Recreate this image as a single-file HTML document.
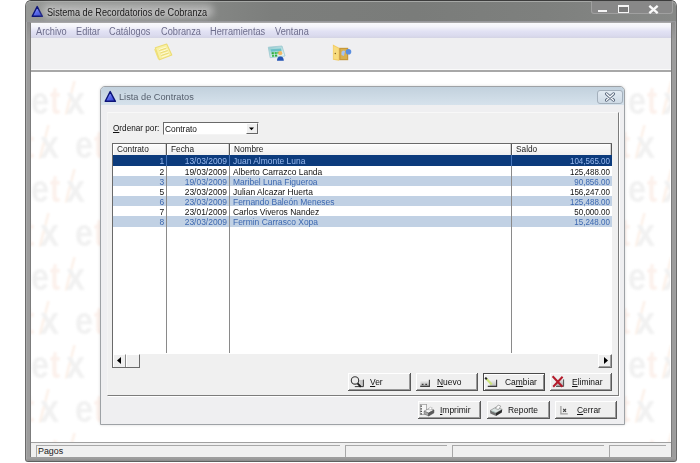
<!DOCTYPE html>
<html><head><meta charset="utf-8">
<style>
*{box-sizing:border-box;margin:0;padding:0}
html,body{width:700px;height:463px;overflow:hidden;background:#fff;font-family:"Liberation Sans",sans-serif;}
.a{position:absolute}
.t{position:absolute;white-space:pre;line-height:1}
/* main window */
#frame{left:25px;top:0;width:652px;height:462px;background:linear-gradient(#8e8e8e 0,#8e8e8e 22px,#9c9c9c 40px,#9c9c9c 456px,#a0a0a0 457px,#8c8c8c 460px,#747474 462px);border:1px solid #6a6a6a;border-top-color:#3c3c3c;border-bottom-color:#606060;border-radius:6px 6px 3px 3px;box-shadow:inset 1px 0 #a8a8a8,inset -1px 0 #a0a0a0}
#titlebar{left:26px;top:1px;width:650px;height:21px;background:linear-gradient(90deg,#979997 0%,#8c8e8c 20%,#7c7e7c 38%,#7a7c7a 60%,#7e807e 80%,#868886 100%);box-shadow:inset 0 1px #a6a8a6,inset 0 -1px #98989c;border-radius:5px 5px 0 0}
#client{left:30px;top:22px;width:642px;height:435px;background:#fff;border:1px solid #7c7c7c;border-top-color:#a8a8a8}
#menubar{left:31px;top:23px;width:640px;height:15px;background:linear-gradient(#fafafd 0%,#f4f4fa 25%,#e2e2f4 55%,#dadaee 85%,#d4d4e4 100%)}
#toolbar{left:31px;top:38px;width:640px;height:34px;background:#efeff1;border-bottom:2px solid #a8a8a8;box-shadow:inset 0 -1px #fafafa}
#status{left:31px;top:442px;width:640px;height:15px;background:#f0f0f0;border-top:1px solid #a0a0a0}
.sp{position:absolute;top:445px;height:12px;border-top:1px solid #a8a8a8;border-left:1px solid #a8a8a8}
.wm{position:absolute;width:80px;height:44px;font-size:38px;line-height:1;white-space:pre;filter:blur(1px);font-weight:bold}
.wm span{position:absolute;top:0;display:block;transform:scaleX(0.8);transform-origin:0 0}
.wm .g{color:#f1f1f1}
.wm .o{color:#fcf1ec}
.wm .sl{font-weight:normal;color:#fcefe6;transform:scaleX(0.75) scaleY(1.2) skewX(-8deg);transform-origin:0 80%}
.wm .xx{transform:scaleX(0.9)}
.wm .ee{transform:scaleX(0.85)}
/* dialog */
#dlg{left:100px;top:86px;width:525px;height:339px;background:#efeff1;border:1px solid #9ea2a6;border-radius:5px 5px 0 0;box-shadow:0 0 3px rgba(0,0,0,0.15)}
#dlgtitle{left:101px;top:87px;width:523px;height:18px;background:linear-gradient(#c2d1dd,#d6e2ec);border-radius:4px 4px 0 0}
#dlgbody{left:107px;top:112px;width:512px;height:284px;background:#f0f0f0;border-right:1px solid #7c7c7c;border-bottom:1px solid #7c7c7c;border-top:1px solid #f8f8f8;border-left:1px solid #f4f4f4;box-shadow:1px 1px #fff}
#grid{left:112px;top:143px;width:500px;height:225px;background:#fff;border-left:1px solid #6a6a6a;border-top:1px solid #6a6a6a}
.hdr{position:absolute;top:144px;height:11px;background:linear-gradient(#fdfdfd,#efefef);border-right:1px solid #555;box-shadow:inset -1px 0 #d4d4d4,inset 1px 1px #fff}
.row{position:absolute;left:113px;width:499px;height:10px}
.cell{position:absolute;font-size:9.2px;line-height:10px;white-space:pre;margin-top:1px;transform:scaleX(0.92);transform-origin:100% 0}
.cell.n{transform:scaleX(0.87)}
.cell.l{transform-origin:0 0}
.vl{position:absolute;top:155px;height:198px;width:1px;background:#8a8a8a}
.btn{position:absolute;height:18px;width:63px;background:#efefef;border-right:1px solid #5a5a5a;border-bottom:1px solid #5a5a5a;box-shadow:inset 1px 1px #fff,inset -1px -1px #9a9a9a}
.btn .l{position:absolute;top:4px;white-space:pre;color:#111;line-height:1}
u{text-decoration:underline;text-underline-offset:1px}
</style></head><body>
<div class="a" id="frame"></div>
<div class="a" id="titlebar"></div>
<!-- title icon -->
<svg class="a" style="left:31px;top:5px" width="13" height="13" viewBox="0 0 13 13">
<defs><linearGradient id="tg" x1="0.1" y1="0.2" x2="0.8" y2="1"><stop offset="0" stop-color="#b4c0ff"/><stop offset="0.45" stop-color="#6070f0"/><stop offset="1" stop-color="#3444d0"/></linearGradient></defs>
<path d="M6.2 1.6 L11.4 11.3 L1.2 11.3 Z" fill="url(#tg)" stroke="#0c1478" stroke-width="1.4" stroke-linejoin="round"/>
</svg>
<div class="a" style="left:42px;top:4px;width:172px;height:14px;border-radius:7px;background:rgba(200,200,200,0.6);filter:blur(3px)"></div>
<div class="t" style="left:46.5px;top:7.6px;font-size:10px;transform:scaleX(0.915);transform-origin:0 0;color:#1a1a1a;text-shadow:0 0 5px #c0c0c0,0 0 3px #c8c8c8">Sistema de Recordatorios de Cobranza</div>
<!-- caption buttons -->
<div class="a" style="left:591px;top:1px;width:82px;height:13px;border:1px solid #a0a0a0;border-top:none;border-radius:0 0 3px 3px;background:#888"></div>
<div class="a" style="left:598px;top:10px;width:9px;height:2px;background:#f4f4f4"></div>
<div class="a" style="left:617.5px;top:5px;width:11px;height:7.5px;border:1.6px solid #f6f6f6;border-top-width:2.6px;background:#7a7a7a"></div>
<svg class="a" style="left:648px;top:4.5px" width="11" height="9" viewBox="0 0 11 9"><path d="M1.3 0.8 L9.7 8.2 M9.7 0.8 L1.3 8.2" stroke="#f8f8f8" stroke-width="2.3"/></svg>

<div class="a" id="client"></div>
<div class="a" id="menubar"></div>
<div class="t" style="left:35.5px;top:27px;font-size:10px;transform:scaleX(0.92);transform-origin:0 0;color:#6e6e8c">Archivo</div>
<div class="t" style="left:76px;top:27px;font-size:10px;transform:scaleX(0.92);transform-origin:0 0;color:#6e6e8c">Editar</div>
<div class="t" style="left:109px;top:27px;font-size:10px;transform:scaleX(0.92);transform-origin:0 0;color:#6e6e8c">Catálogos</div>
<div class="t" style="left:160.5px;top:27px;font-size:10px;transform:scaleX(0.92);transform-origin:0 0;color:#6e6e8c">Cobranza</div>
<div class="t" style="left:210px;top:27px;font-size:10px;transform:scaleX(0.92);transform-origin:0 0;color:#6e6e8c">Herramientas</div>
<div class="t" style="left:275px;top:27px;font-size:10px;transform:scaleX(0.92);transform-origin:0 0;color:#6e6e8c">Ventana</div>
<div class="a" id="toolbar"></div>
<!-- toolbar icons -->
<svg class="a" style="left:148px;top:40px;filter:blur(0.35px)" width="28" height="24" viewBox="0 0 28 24">
<path d="M7.3 7.8 L18.7 4.1 L23.8 15 L11.4 19.7 Z" fill="#f8f0a4" stroke="#ecdc74" stroke-width="1.1" stroke-linejoin="round"/>
<path d="M6.8 9 L10.8 19.2" stroke="#f0e078" stroke-width="1.4"/>
<path d="M11 9.5 L18 7.2 M12 12 L19.5 9.5 M13 14.5 L20.5 12 M14 17 L21 14.5" stroke="#fffbd8" stroke-width="1"/>
<path d="M11.2 10.5 L18.2 8.2 M12.2 13 L19.7 10.5 M13.2 15.5 L20.7 13" stroke="#e4d060" stroke-width="0.7"/>
</svg>
<svg class="a" style="left:264px;top:42px;filter:blur(0.35px)" width="28" height="22" viewBox="0 0 28 22">
<defs><linearGradient id="cg" x1="0" y1="0" x2="0.6" y2="1"><stop offset="0" stop-color="#8cc8cc"/><stop offset="1" stop-color="#e8f6f6"/></linearGradient></defs>
<path d="M4.3 5.2 L18 4 L21 14 L6.2 15.7 Z" fill="url(#cg)" stroke="#9cc8d0" stroke-width="0.8"/>
<path d="M6.5 7.2 L17 6.4 L17.6 9 L7 9.8 Z" fill="#6cc0c8"/>
<rect x="7.6" y="10.2" width="2.2" height="2" fill="#30a840"/><rect x="10.6" y="10" width="2.2" height="2" fill="#40c050"/><rect x="13.4" y="9.8" width="2" height="2" fill="#30a840"/>
<rect x="8" y="12.8" width="2.2" height="2" fill="#40c050"/><rect x="11" y="12.6" width="2.2" height="2" fill="#30a840"/>
<circle cx="16.2" cy="11.2" r="2.1" fill="#f0b868"/>
<path d="M13 18.8 Q13 14.4 16.4 14.4 Q19.8 14.4 19.8 18.8 Z" fill="#2454b4"/>
</svg>
<svg class="a" style="left:328px;top:40px;filter:blur(0.35px)" width="28" height="24" viewBox="0 0 28 24">
<path d="M11.1 7.8 L20.2 7.8 L20.2 20.2 L11.1 20.2 Z" fill="#c89838"/>
<path d="M12.5 9 L19 9 L19 19 L12.5 19 Z" fill="#d8b050"/>
<path d="M13.5 12 Q15 9.5 17 11 L16 16 L13.5 15 Z" fill="#a8c4f4"/>
<path d="M4.9 4.4 L11.1 7.8 L11.1 20.7 L4.9 19.8 Z" fill="#f2cc66"/>
<path d="M5.5 6 L10.5 8.5 L10.5 19.5 L5.5 18.8 Z" fill="#f8dc80"/>
<circle cx="7.3" cy="13.5" r="0.7" fill="#806020"/>
<circle cx="20.5" cy="11.8" r="2.8" fill="#5a8ee0"/>
</svg>
<!-- watermark -->
<div id="wm" class="a" style="left:31px;top:72px;width:639px;height:370px;overflow:hidden"><div class="wm" style="left:1px;top:10px"><span class="g ee" style="left:-1px">e</span><span class="o" style="left:18px">t</span><span class="o sl" style="left:33px">/</span><span class="g xx" style="left:34px">x</span></div><div class="wm" style="left:597.5px;top:10px"><span class="g ee" style="left:-1px">e</span><span class="o" style="left:18px">t</span><span class="o sl" style="left:33px">/</span><span class="g xx" style="left:34px">x</span></div><div class="wm" style="left:-25.3px;top:54px"><span class="g ee" style="left:-1px">e</span><span class="o" style="left:18px">t</span><span class="o sl" style="left:33px">/</span><span class="g xx" style="left:34px">x</span></div><div class="wm" style="left:44.5px;top:54px"><span class="g ee" style="left:-1px">e</span><span class="o" style="left:18px">t</span><span class="o sl" style="left:33px">/</span><span class="g xx" style="left:34px">x</span></div><div class="wm" style="left:570.7px;top:54px"><span class="g ee" style="left:-1px">e</span><span class="o" style="left:18px">t</span><span class="o sl" style="left:33px">/</span><span class="g xx" style="left:34px">x</span></div><div class="wm" style="left:1px;top:98px"><span class="g ee" style="left:-1px">e</span><span class="o" style="left:18px">t</span><span class="o sl" style="left:33px">/</span><span class="g xx" style="left:34px">x</span></div><div class="wm" style="left:597.5px;top:98px"><span class="g ee" style="left:-1px">e</span><span class="o" style="left:18px">t</span><span class="o sl" style="left:33px">/</span><span class="g xx" style="left:34px">x</span></div><div class="wm" style="left:-25.3px;top:142px"><span class="g ee" style="left:-1px">e</span><span class="o" style="left:18px">t</span><span class="o sl" style="left:33px">/</span><span class="g xx" style="left:34px">x</span></div><div class="wm" style="left:44.5px;top:142px"><span class="g ee" style="left:-1px">e</span><span class="o" style="left:18px">t</span><span class="o sl" style="left:33px">/</span><span class="g xx" style="left:34px">x</span></div><div class="wm" style="left:570.7px;top:142px"><span class="g ee" style="left:-1px">e</span><span class="o" style="left:18px">t</span><span class="o sl" style="left:33px">/</span><span class="g xx" style="left:34px">x</span></div><div class="wm" style="left:1px;top:186px"><span class="g ee" style="left:-1px">e</span><span class="o" style="left:18px">t</span><span class="o sl" style="left:33px">/</span><span class="g xx" style="left:34px">x</span></div><div class="wm" style="left:597.5px;top:186px"><span class="g ee" style="left:-1px">e</span><span class="o" style="left:18px">t</span><span class="o sl" style="left:33px">/</span><span class="g xx" style="left:34px">x</span></div><div class="wm" style="left:-25.3px;top:230px"><span class="g ee" style="left:-1px">e</span><span class="o" style="left:18px">t</span><span class="o sl" style="left:33px">/</span><span class="g xx" style="left:34px">x</span></div><div class="wm" style="left:44.5px;top:230px"><span class="g ee" style="left:-1px">e</span><span class="o" style="left:18px">t</span><span class="o sl" style="left:33px">/</span><span class="g xx" style="left:34px">x</span></div><div class="wm" style="left:570.7px;top:230px"><span class="g ee" style="left:-1px">e</span><span class="o" style="left:18px">t</span><span class="o sl" style="left:33px">/</span><span class="g xx" style="left:34px">x</span></div><div class="wm" style="left:1px;top:274px"><span class="g ee" style="left:-1px">e</span><span class="o" style="left:18px">t</span><span class="o sl" style="left:33px">/</span><span class="g xx" style="left:34px">x</span></div><div class="wm" style="left:597.5px;top:274px"><span class="g ee" style="left:-1px">e</span><span class="o" style="left:18px">t</span><span class="o sl" style="left:33px">/</span><span class="g xx" style="left:34px">x</span></div><div class="wm" style="left:-25.3px;top:318px"><span class="g ee" style="left:-1px">e</span><span class="o" style="left:18px">t</span><span class="o sl" style="left:33px">/</span><span class="g xx" style="left:34px">x</span></div><div class="wm" style="left:44.5px;top:318px"><span class="g ee" style="left:-1px">e</span><span class="o" style="left:18px">t</span><span class="o sl" style="left:33px">/</span><span class="g xx" style="left:34px">x</span></div><div class="wm" style="left:570.7px;top:318px"><span class="g ee" style="left:-1px">e</span><span class="o" style="left:18px">t</span><span class="o sl" style="left:33px">/</span><span class="g xx" style="left:34px">x</span></div><div class="wm" style="left:1px;top:362px"><span class="g ee" style="left:-1px">e</span><span class="o" style="left:18px">t</span><span class="o sl" style="left:33px">/</span><span class="g xx" style="left:34px">x</span></div><div class="wm" style="left:597.5px;top:362px"><span class="g ee" style="left:-1px">e</span><span class="o" style="left:18px">t</span><span class="o sl" style="left:33px">/</span><span class="g xx" style="left:34px">x</span></div></div>

<div class="a" id="status"></div>
<div class="sp" style="left:36px;width:304px"></div>
<div class="sp" style="left:345px;width:102px"></div>
<div class="sp" style="left:452px;width:152px"></div>
<div class="sp" style="left:609px;width:57px"></div>
<div class="t" style="left:38px;top:447px;font-size:8.9px;color:#222">Pagos</div>

<!-- dialog -->
<div class="a" id="dlg"></div>
<div class="a" id="dlgtitle"></div>
<svg class="a" style="left:104px;top:90px" width="13" height="13" viewBox="0 0 13 13">
<path d="M6.2 1.6 L11.4 11.3 L1.2 11.3 Z" fill="url(#tg)" stroke="#0c1478" stroke-width="1.4" stroke-linejoin="round"/>
</svg>
<div class="t" style="left:119px;top:92px;font-size:9.6px;transform:scaleX(0.96);transform-origin:0 0;color:#56606e">Lista de Contratos</div>
<div class="a" style="left:597px;top:90px;width:26px;height:14px;border:1px solid #a4b0bc;border-radius:3px;background:linear-gradient(#e2eaf2,#cfdbe6)"></div>
<svg class="a" style="left:604px;top:92px" width="12" height="10" viewBox="0 0 12 10"><path d="M2.5 1.8 L9.5 8.2 M9.5 1.8 L2.5 8.2" stroke="#566478" stroke-width="3" stroke-linecap="round"/><path d="M2.5 1.8 L9.5 8.2 M9.5 1.8 L2.5 8.2" stroke="#fafcff" stroke-width="1.3" stroke-linecap="round"/></svg>
<div class="a" id="dlgbody"></div>

<div class="t" style="left:113px;top:123.5px;font-size:8.8px;transform:scaleX(0.93);transform-origin:0 0;color:#111"><u>O</u>rdenar por:</div>
<div class="a" style="left:163px;top:122px;width:96px;height:13px;background:#fff;border-top:1px solid #6a6a6a;border-left:1px solid #6a6a6a;border-right:1px solid #f4f4f4;border-bottom:1px solid #f4f4f4"></div>
<div class="t" style="left:165px;top:125px;font-size:8.9px;transform:scaleX(0.94);transform-origin:0 0;color:#111">Contrato</div>
<div class="a" style="left:246px;top:123px;width:12px;height:11px;background:#f0f0f0;border-right:1px solid #666;border-bottom:1px solid #666;border-top:1px solid #fff;border-left:1px solid #fff"></div>
<svg class="a" style="left:249px;top:127px" width="5" height="4" viewBox="0 0 5 4"><path d="M0 0.5 L5 0.5 L2.5 3.2 Z" fill="#000"/></svg>

<!-- grid -->
<div class="a" id="grid"></div>
<div class="hdr" style="left:113px;width:54px"></div>
<div class="hdr" style="left:167px;width:63px"></div>
<div class="hdr" style="left:230px;width:282px"></div>
<div class="hdr" style="left:512px;width:100px"></div>
<div class="t" style="left:117px;top:145px;font-size:9px;transform:scaleX(0.92);transform-origin:0 0;color:#1a1a1a">Contrato</div>
<div class="t" style="left:171px;top:145px;font-size:9px;transform:scaleX(0.92);transform-origin:0 0;color:#1a1a1a">Fecha</div>
<div class="t" style="left:234px;top:145px;font-size:9px;transform:scaleX(0.92);transform-origin:0 0;color:#1a1a1a">Nombre</div>
<div class="t" style="left:516px;top:145px;font-size:9px;transform:scaleX(0.92);transform-origin:0 0;color:#1a1a1a">Saldo</div>
<div id="rows"><div class="row" style="top:155px;height:11px;background:#0c3b7c"></div><div class="row" style="top:166px;height:10px;background:#fff"></div><div class="row" style="top:176px;height:10px;background:#c1d1e4"></div><div class="row" style="top:186px;height:10px;background:#fff"></div><div class="row" style="top:196px;height:10px;background:#c1d1e4"></div><div class="row" style="top:206px;height:10px;background:#fff"></div><div class="row" style="top:216px;height:11px;background:#c1d1e4"></div><div class="cell" style="top:155px;right:536px;color:#98b8ee">1</div><div class="cell" style="top:155px;right:473px;color:#98b8ee">13/03/2009</div><div class="cell l" style="top:155px;left:232.5px;color:#98b8ee">Juan Almonte Luna</div><div class="cell n" style="top:155px;right:90.5px;color:#98b8ee">104,565.00</div><div class="cell" style="top:166px;right:536px;color:#111">2</div><div class="cell" style="top:166px;right:473px;color:#111">19/03/2009</div><div class="cell l" style="top:166px;left:232.5px;color:#111">Alberto Carrazco Landa</div><div class="cell n" style="top:166px;right:90.5px;color:#111">125,488.00</div><div class="cell" style="top:176px;right:536px;color:#3c68b0">3</div><div class="cell" style="top:176px;right:473px;color:#3c68b0">19/03/2009</div><div class="cell l" style="top:176px;left:232.5px;color:#3c68b0">Maribel Luna Figueroa</div><div class="cell n" style="top:176px;right:90.5px;color:#3c68b0">90,856.00</div><div class="cell" style="top:186px;right:536px;color:#111">5</div><div class="cell" style="top:186px;right:473px;color:#111">23/03/2009</div><div class="cell l" style="top:186px;left:232.5px;color:#111">Julian Alcazar Huerta</div><div class="cell n" style="top:186px;right:90.5px;color:#111">156,247.00</div><div class="cell" style="top:196px;right:536px;color:#3c68b0">6</div><div class="cell" style="top:196px;right:473px;color:#3c68b0">23/03/2009</div><div class="cell l" style="top:196px;left:232.5px;color:#3c68b0">Fernando Baleón Meneses</div><div class="cell n" style="top:196px;right:90.5px;color:#3c68b0">125,488.00</div><div class="cell" style="top:206px;right:536px;color:#111">7</div><div class="cell" style="top:206px;right:473px;color:#111">23/01/2009</div><div class="cell l" style="top:206px;left:232.5px;color:#111">Carlos Viveros Nandez</div><div class="cell n" style="top:206px;right:90.5px;color:#111">50,000.00</div><div class="cell" style="top:216px;right:536px;color:#3c68b0">8</div><div class="cell" style="top:216px;right:473px;color:#3c68b0">23/03/2009</div><div class="cell l" style="top:216px;left:232.5px;color:#3c68b0">Fermin Carrasco Xopa</div><div class="cell n" style="top:216px;right:90.5px;color:#3c68b0">15,248.00</div></div>
<div class="vl" style="left:166px"></div>
<div class="vl" style="left:229px"></div>
<div class="vl" style="left:511px"></div>
<div class="a" style="left:166px;top:155px;width:1px;height:11px;background:#4674b8"></div><div class="a" style="left:229px;top:155px;width:1px;height:11px;background:#4674b8"></div><div class="a" style="left:511px;top:155px;width:1px;height:11px;background:#4674b8"></div>
<!-- scrollbar -->
<div class="a" style="left:113px;top:354px;width:499px;height:14px;background:#f0f0f0"></div>
<div class="a" style="left:112px;top:367px;width:28px;height:1px;background:#6a6a6a"></div>
<div class="a" style="left:113px;top:354px;width:13px;height:13px;background:#efefef;border-top:1px solid #fff;border-left:1px solid #fff;border-right:1px solid #8a8a8a"></div>
<svg class="a" style="left:116px;top:357px" width="6" height="7" viewBox="0 0 6 7"><path d="M5 0 L5 7 L1 3.5 Z" fill="#000"/></svg>
<div class="a" style="left:126px;top:354px;width:14px;height:13px;background:#efefef;border-top:1px solid #fff;border-left:1px solid #fff;border-right:1px solid #6a6a6a"></div>
<div class="a" style="left:598px;top:354px;width:14px;height:14px;background:#efefef;border-top:1px solid #fff;border-left:1px solid #fff;border-right:1px solid #6a6a6a;border-bottom:1px solid #6a6a6a;box-shadow:inset -1px -1px #a0a0a0"></div>
<svg class="a" style="left:603px;top:357px" width="6" height="7" viewBox="0 0 6 7"><path d="M1 0 L1 7 L5 3.5 Z" fill="#000"/></svg>

<!-- buttons -->
<div class="btn" style="left:348px;top:373px"></div>
<div class="btn" style="left:416px;top:373px;width:62px"></div>
<div class="btn" style="left:483px;top:373px;width:62px;border:1px solid #4a4a4a;box-shadow:inset 1px 1px #fff,inset -1px -1px #8a8a8a"></div>
<div class="btn" style="left:550px;top:373px;width:62px"></div>
<div class="btn" style="left:418px;top:401px"></div>
<div class="btn" style="left:487px;top:401px"></div>
<div class="btn" style="left:555px;top:401px;width:62px"></div>
<div class="t" style="left:370px;top:378px;font-size:8.8px;transform:scaleX(0.96);transform-origin:0 0;color:#111"><u>V</u>er</div>
<div class="t" style="left:437px;top:378px;font-size:8.8px;transform:scaleX(0.96);transform-origin:0 0;color:#111"><u>N</u>uevo</div>
<div class="t" style="left:505px;top:378px;font-size:8.8px;transform:scaleX(0.96);transform-origin:0 0;color:#111">Ca<u>m</u>biar</div>
<div class="t" style="left:572px;top:378px;font-size:8.8px;transform:scaleX(0.96);transform-origin:0 0;color:#111"><u>E</u>liminar</div>
<div class="t" style="left:440px;top:406px;font-size:8.8px;transform:scaleX(0.96);transform-origin:0 0;color:#111"><u>I</u>mprimir</div>
<div class="t" style="left:508px;top:406px;font-size:8.8px;transform:scaleX(0.96);transform-origin:0 0;color:#111">Reporte</div>
<div class="t" style="left:577px;top:406px;font-size:8.8px;transform:scaleX(0.96);transform-origin:0 0;color:#111"><u>C</u>errar</div>
<!-- button icons -->
<svg class="a" style="left:347px;top:372px" width="20" height="20" viewBox="0 0 20 20">
<rect x="12.6" y="8" width="3.6" height="6.5" fill="#c8c8c8"/>
<path d="M16.4 7.6 L16.4 14.6 L7.8 14.6" stroke="#3a3a3a" stroke-width="1" fill="none"/>
<circle cx="8" cy="8.4" r="3.7" fill="#ececec" stroke="#3a3a3a" stroke-width="1.1"/>
<path d="M10.6 11.3 L13.8 14.8" stroke="#1a1a1a" stroke-width="1.9"/>
</svg>
<svg class="a" style="left:415px;top:372px" width="20" height="20" viewBox="0 0 20 20">
<defs><linearGradient id="ng" x1="0" y1="0" x2="0" y2="1"><stop offset="0" stop-color="#f4f4f4"/><stop offset="1" stop-color="#a8a8a8"/></linearGradient></defs>
<path d="M5.4 9.8 L6.6 8.2 L14.6 8.2 L14.6 14.6 L5.4 14.6 Z" fill="url(#ng)"/>
<path d="M14.4 7.8 L14.4 14.4 L5.2 14.4" stroke="#404040" stroke-width="1.1" fill="none"/>
<rect x="6.8" y="11.8" width="1.7" height="1.1" fill="#303030"/>
<rect x="10.3" y="11.8" width="1.7" height="1.1" fill="#303030"/>
</svg>
<svg class="a" style="left:482px;top:372px" width="20" height="20" viewBox="0 0 20 20">
<defs><linearGradient id="cgb" x1="0" y1="0" x2="0" y2="1"><stop offset="0" stop-color="#f0f0f0"/><stop offset="1" stop-color="#b8b8b8"/></linearGradient></defs>
<rect x="7.8" y="8" width="6.8" height="6.4" fill="url(#cgb)"/>
<path d="M14.6 7.8 L14.6 14.4 L5.8 14.4" stroke="#3c3c3c" stroke-width="1.1" fill="none"/>
<path d="M4.6 7 L9.8 12.6" stroke="#cce47a" stroke-width="2.2"/>
<path d="M3.2 5.6 L4.8 7.3" stroke="#222" stroke-width="2"/>
</svg>
<svg class="a" style="left:549px;top:372px" width="20" height="20" viewBox="0 0 20 20">
<defs><linearGradient id="eg" x1="0" y1="0" x2="0" y2="1"><stop offset="0" stop-color="#e8e8e8"/><stop offset="1" stop-color="#a8a8a8"/></linearGradient></defs>
<rect x="7.5" y="7.2" width="7.2" height="7.2" fill="url(#eg)"/>
<path d="M14.6 7.4 L14.6 14.4 L7 14.4" stroke="#505050" stroke-width="1" fill="none"/>
<path d="M3.6 4.2 L13.4 14.8 M13.6 4.8 L4.2 14.8" stroke="#b41c2c" stroke-width="2"/>
</svg>
<svg class="a" style="left:417px;top:400px" width="20" height="20" viewBox="0 0 20 20">
<rect x="3.2" y="4.4" width="6.4" height="10" fill="#f6f6f6" stroke="#a0a0a0" stroke-width="0.8"/>
<path d="M3.4 6.2 L5 6.2 M3.4 8.8 L5 8.8 M3.4 11.4 L5 11.4 M3.4 13.8 L5 13.8" stroke="#505050" stroke-width="1.2"/>
<path d="M7 11.2 L12.4 8.4 L17 10 L11.6 13 Z" fill="#f4f4f4" stroke="#777" stroke-width="0.6"/>
<path d="M7 11.2 L11.6 13 L11.6 16 L7.2 14 Z" fill="#a8a8a8" stroke="#666" stroke-width="0.5"/>
<path d="M11.6 13 L17 10 L16.8 13 L11.6 16 Z" fill="#5a5a5a" stroke="#444" stroke-width="0.5"/>
<path d="M11 9.2 L13.4 7.2 L15.4 8 L13.2 10 Z" fill="#fff" stroke="#999" stroke-width="0.5"/>
</svg>
<svg class="a" style="left:486px;top:400px" width="20" height="20" viewBox="0 0 20 20">
<path d="M4 10.6 L10.2 7 L16.2 9.4 L10 13 Z" fill="#dce4e2" stroke="#6a6a6a" stroke-width="0.5"/>
<path d="M4 10.6 L10 13 L10 16 L4.3 13.4 Z" fill="#707070"/>
<path d="M10 13 L16.2 9.4 L15.8 12.4 L10 16 Z" fill="#2a2a2a"/>
<path d="M9.4 8.4 L12.2 5 L14.8 6.2 L12.4 9.6 Z" fill="#fbfbfb" stroke="#7a7a7a" stroke-width="0.6"/>
<path d="M6 11 L9.5 12.5" stroke="#a8c8c0" stroke-width="0.8"/>
</svg>
<svg class="a" style="left:554px;top:400px" width="20" height="20" viewBox="0 0 20 20">
<path d="M6.9 6 L6.9 13.8 L13.8 13.8" stroke="#a0a0a0" stroke-width="1.3" fill="none"/>
<path d="M9.2 8.8 L12 11.8 M12 8.8 L9.2 11.8" stroke="#404040" stroke-width="1.1"/>
</svg>

</body></html>
